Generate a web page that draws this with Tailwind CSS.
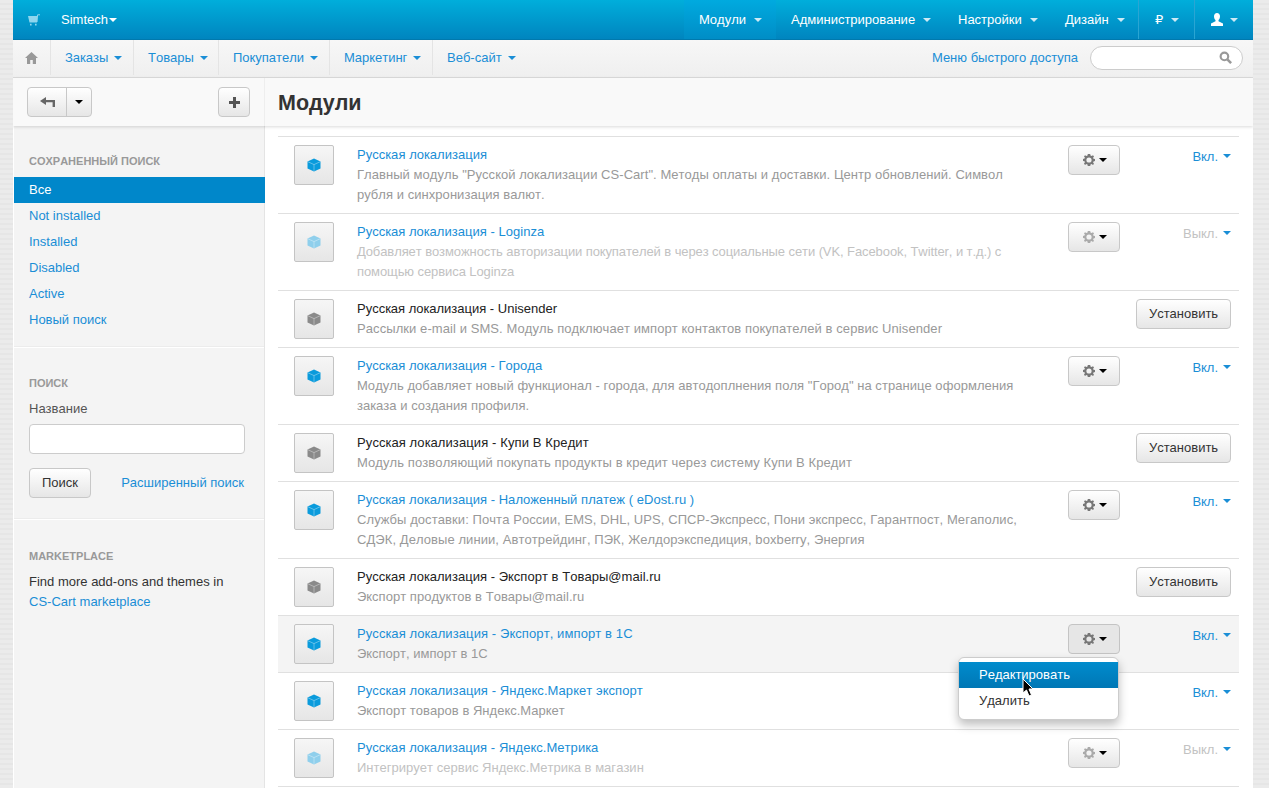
<!DOCTYPE html>
<html lang="ru">
<head>
    <meta charset="UTF-8">
    <title>Модули</title>
    <script src="https://cdn.jsdelivr.net/npm/@tailwindcss/browser@4"></script>
</head>
<body class="h-screen overflow-hidden bg-[#e8e8e8] bg-[repeating-linear-gradient(0deg,#ebebeb_0,#ebebeb_3px,#e6e6e6_3px,#e6e6e6_5px)] font-['Liberation_Sans',Arial,sans-serif] text-[13px] leading-5 text-[#333] [font-kerning:none]">
<div class="relative ml-[13px] w-[1240px] h-[788px] overflow-hidden bg-white">

    <!-- top bar -->
    <div class="flex h-10 items-stretch border-b border-[#0079ad] bg-gradient-to-b from-[#00aedb] to-[#0085bf] text-white">
        <div class="flex w-[27px] items-center justify-end">
            <svg class="h-3 w-3" viewBox="0 0 12 12"><path fill="#8ed6ee" d="M0 2h9.200L9 8.500H1.500zM2 9.800h1.600V11.500H2zM7 9.800h1.600V11.500H7z"/><path fill="none" stroke="#8ed6ee" d="M9 8 9.600 .8H12"/></svg>
        </div>
        <div class="ml-[21px] flex items-center">Simtech<span class="ml-px h-0 w-0 border-x-4 border-t-4 border-x-transparent border-t-white"></span></div>
        <div class="ml-auto flex items-stretch">
            <div class="flex w-[92px] items-center bg-gradient-to-b from-[#00aadf] to-[#008dc6] pl-[15px]">Модули<span class="ml-2 h-0 w-0 border-x-4 border-t-4 border-x-transparent border-t-[#cdeaf5]"></span></div>
            <div class="flex w-[167px] items-center pl-[15px]">Администрирование<span class="ml-2 h-0 w-0 border-x-4 border-t-4 border-x-transparent border-t-[#cdeaf5]"></span></div>
            <div class="flex w-[107px] items-center pl-[15px]">Настройки<span class="ml-2 h-0 w-0 border-x-4 border-t-4 border-x-transparent border-t-[#cdeaf5]"></span></div>
            <div class="flex w-[88px] items-center pl-[15px]">Дизайн<span class="ml-2 h-0 w-0 border-x-4 border-t-4 border-x-transparent border-t-[#cdeaf5]"></span></div>
            <div class="flex w-[56px] items-center border-l border-[#2aa5d3] pl-4 font-['DejaVu_Sans',sans-serif] text-[13px]">₽<span class="ml-2 h-0 w-0 border-x-4 border-t-4 border-x-transparent border-t-[#cdeaf5]"></span></div>
            <div class="flex w-[59px] items-center border-l border-[#2aa5d3] pl-4">
                <svg class="h-[13px] w-3" viewBox="0 0 12 13"><path fill="#fff" d="M6 0c1.800 0 3 1.300 3 3.200C9 5 8.200 6.500 7.500 7v1.200L12 10.500V13H0v-2.500l4.500-2.300V7C3.800 6.500 3 5 3 3.200 3 1.300 4.200 0 6 0z"/></svg>
                <span class="ml-[7px] h-0 w-0 border-x-4 border-t-4 border-x-transparent border-t-[#cdeaf5]"></span>
            </div>
        </div>
    </div>

    <!-- second nav -->
    <div class="flex h-[38px] items-stretch border-b border-[#dcdcdc] bg-gradient-to-b from-[#f7f7f7] to-[#efefef] pb-[2px] text-[#1a8ed6]">
        <div class="flex w-[38px] items-center justify-center border-r border-[#e4e4e4]">
            <svg class="h-3 w-[13px]" viewBox="0 0 13 12"><path fill="#999" d="M6.500 0 13 6h-2v6H7.800V8H5.200v4H2V6H0z"/></svg>
        </div>
        <div class="flex w-[83px] items-center border-r border-[#e4e4e4] pl-[14px]">Заказы<span class="ml-[6px] h-0 w-0 border-x-4 border-t-4 border-x-transparent border-t-[#1a8ed6]"></span></div>
        <div class="flex w-[85px] items-center border-r border-[#e4e4e4] pl-[14px]">Товары<span class="ml-[6px] h-0 w-0 border-x-4 border-t-4 border-x-transparent border-t-[#1a8ed6]"></span></div>
        <div class="flex w-[111px] items-center border-r border-[#e4e4e4] pl-[14px]">Покупатели<span class="ml-[6px] h-0 w-0 border-x-4 border-t-4 border-x-transparent border-t-[#1a8ed6]"></span></div>
        <div class="flex w-[103px] items-center border-r border-[#e4e4e4] pl-[14px]">Маркетинг<span class="ml-[6px] h-0 w-0 border-x-4 border-t-4 border-x-transparent border-t-[#1a8ed6]"></span></div>
        <div class="flex items-center pl-[14px]">Веб-сайт<span class="ml-[6px] h-0 w-0 border-x-4 border-t-4 border-x-transparent border-t-[#1a8ed6]"></span></div>
        <div class="ml-auto flex items-center pr-[10px]">
            <span>Меню быстрого доступа</span>
            <div class="ml-3 flex h-6 w-[153px] items-center justify-end rounded-xl border border-[#ccc] bg-white pr-[10px]">
                <svg class="h-[13px] w-[13px]" viewBox="0 0 12 12"><circle cx="5" cy="5" r="3.500" fill="none" stroke="#999" stroke-width="2"/><path stroke="#999" stroke-width="2.400" d="m7.700 7.700 3.500 3.500"/></svg>
            </div>
        </div>
    </div>

    <!-- toolbar -->
    <div class="relative z-10 flex h-[48px] bg-[#f9f9f9] shadow-[0_1px_3px_rgba(0,0,0,0.15)]">
        <div class="flex w-[252px] items-center justify-between border-r border-[#eeeeee] pl-[14px] pr-[14px]">
            <div class="flex h-[30px] w-[65px] rounded border border-[#c8c8c8] bg-gradient-to-b from-white to-[#e6e6e6]">
                <div class="flex w-[39px] items-center justify-center border-r border-[#c8c8c8]">
                    <svg class="h-[10px] w-[15px]" viewBox="0 0 15 10"><path fill="#666" d="M0 4 6 0v3h9v7h-2.400V5.300H6V8z"/></svg>
                </div>
                <div class="flex flex-1 items-center justify-center"><span class="h-0 w-0 border-x-4 border-t-4 border-x-transparent border-t-black"></span></div>
            </div>
            <div class="flex h-[30px] w-8 items-center justify-center rounded border border-[#c8c8c8] bg-gradient-to-b from-white to-[#e6e6e6]">
                <svg class="h-[11px] w-[11px]" viewBox="0 0 11 11"><path fill="#555" d="M4 0h3v4h4v3H7v4H4V7H0V4h4z"/></svg>
            </div>
        </div>
        <h1 class="ml-[13px] flex items-center pt-[2px] text-[21.5px] font-bold text-[#333]">Модули</h1>
    </div>

    <div class="flex">
        <!-- sidebar -->
        <aside class="h-[700px] w-[252px] shrink-0 border-r border-[#e4e4e4] border-l border-l-white bg-[#f4f4f4]">
            <div class="pt-[25px]">
                <h4 class="mb-[6px] pl-[15px] text-[11px] font-bold uppercase text-[#999]">Сохраненный поиск</h4>
                <div class="mr-[-1px] flex h-[26px] items-center bg-[#0087ca] pl-[15px] text-white">Все</div>
                <div class="flex h-[26px] items-center pl-[15px] text-[#1a8ed6]">Not installed</div>
                <div class="flex h-[26px] items-center pl-[15px] text-[#1a8ed6]">Installed</div>
                <div class="flex h-[26px] items-center pl-[15px] text-[#1a8ed6]">Disabled</div>
                <div class="flex h-[26px] items-center pl-[15px] text-[#1a8ed6]">Active</div>
                <div class="flex h-[26px] items-center pl-[15px] text-[#1a8ed6]">Новый поиск</div>
            </div>
            <div class="mt-[13px] border-t border-b border-t-[#ececec] border-b-white"></div>
            <div class="px-[15px] pt-[25px]">
                <h4 class="mb-[6px] text-[11px] font-bold uppercase text-[#999]">Поиск</h4>
                <div class="mb-[5px] text-[#555]">Название</div>
                <div class="h-[30px] w-[216px] rounded border border-[#ccc] bg-white"></div>
                <div class="mt-[14px] flex items-center justify-between pr-[5px]">
                    <div class="flex h-[30px] w-[62px] items-center justify-center rounded border border-[#c8c8c8] bg-gradient-to-b from-white to-[#e6e6e6]">Поиск</div>
                    <span class="text-[#1a8ed6]">Расширенный поиск</span>
                </div>
            </div>
            <div class="mt-[20px] border-t border-b border-t-[#ececec] border-b-white"></div>
            <div class="px-[15px] pt-[26px]">
                <h4 class="mb-[6px] text-[11px] font-bold uppercase text-[#999]">Marketplace</h4>
                <p>Find more add-ons and themes in<br><span class="text-[#1a8ed6]">CS-Cart marketplace</span></p>
            </div>
        </aside>

        <!-- addons list -->
        <main id="addons" class="ml-[13px] mt-[10px] w-[961px] border-t border-[#e0e0e0]"></main>
    </div>

    <!-- open dropdown -->
    <div class="absolute left-[945px] top-[657px] z-20 h-[63px] w-[161px] rounded-md border border-[#ccc] bg-white py-1 shadow-[0_5px_10px_rgba(0,0,0,0.25)]">
        <div class="flex h-[26px] items-center bg-gradient-to-b from-[#008ccd] to-[#0077b5] pl-5 text-white">Редактировать</div>
        <div class="flex h-[26px] items-center pl-5">Удалить</div>
    </div>
    <svg class="absolute left-[1009px] top-[678px] z-30 h-[19px] w-[13px]" viewBox="0 0 13 19"><path fill="#000" stroke="#fff" stroke-width="1" d="M1 1v14l3.500-3 2.500 6 2.500-1-2.500-6H11z"/></svg>
</div>

<script>
    const cube = (color) => `<svg class="h-[14px] w-[14px]" viewBox="0 0 14 14"><path fill="${color}" d="M7 .5l6.500 3v7L7 13.500.5 10.500v-7z"/><path fill="none" stroke="#fff" stroke-opacity=".45" stroke-width=".8" d="M1 3.800l6 2.800 6-2.800M7 6.600v6.600"/></svg>`;
    const gear = (color) => `<svg class="h-3 w-3" viewBox="0 0 12 12"><path fill="${color}" fill-rule="evenodd" d="M4.800 0h2.400l.3 1.600 1.100.5L10 1.200 11 2.500l-.9 1.300.4 1 1.500.3v2l-1.500.3-.4 1 .9 1.300-1 1.300-1.400-.9-1.100.5-.3 1.600H4.800l-.3-1.600-1.100-.5-1.400.9L1 9.500l.9-1.300-.4-1L0 6.900v-2l1.500-.3.4-1L1 2.500 2 1.200l1.400.9 1.100-.5zM6 3.400a2.500 2.500 0 1 0 0 5.200 2.500 2.500 0 0 0 0-5.200z"/></svg>`;

    // ts, tt: letter spacing of description and title, px
    const addons = [
        {state: 'on', ts: 0.05, tt: 0.05, title: 'Русская локализация', text: 'Главный модуль "Русской локализации CS-Cart". Методы оплаты и доставки. Центр обновлений. Символ<br>рубля и синхронизация валют.'},
        {state: 'off', ts: -0.09, tt: 0.03, title: 'Русская локализация - Loginza', text: 'Добавляет возможность авторизации покупателей в через социальные сети (VK, Facebook, Twitter, и т.д.) с<br>помощью сервиса Loginza'},
        {state: 'new', ts: 0.08, tt: 0, title: 'Русская локализация - Unisender', text: 'Рассылки e-mail и SMS. Модуль подключает импорт контактов покупателей в сервис Unisender'},
        {state: 'on', ts: 0.04, tt: 0.03, title: 'Русская локализация - Города', text: 'Модуль добавляет новый функционал - города, для автодоплнения поля "Город" на странице оформления<br>заказа и создания профиля.'},
        {state: 'new', ts: 0.1, tt: 0.11, title: 'Русская локализация - Купи В Кредит', text: 'Модуль позволяющий покупать продукты в кредит через систему Купи В Кредит'},
        {state: 'on', ts: 0.08, tt: 0.04, title: 'Русская локализация - Наложенный платеж ( eDost.ru )', text: 'Службы доставки: Почта России, EMS, DHL, UPS, СПСР-Экспресс, Пони экспресс, Гарантпост, Мегаполис,<br>СДЭК, Деловые линии, Автотрейдинг, ПЭК, Желдорэкспедиция, boxberry, Энергия'},
        {state: 'new', ts: 0.03, tt: 0.04, title: 'Русская локализация - Экспорт в Товары@mail.ru', text: 'Экспорт продуктов в Товары@mail.ru'},
        {state: 'on', ts: 0, tt: 0.1, hover: true, title: 'Русская локализация - Экспорт, импорт в 1С', text: 'Экспорт, импорт в 1С'},
        {state: 'on', ts: 0.03, tt: 0.09, noGear: true, title: 'Русская локализация - Яндекс.Маркет экспорт', text: 'Экспорт товаров в Яндекс.Маркет'},
        {state: 'off', ts: 0.02, tt: 0.05, title: 'Русская локализация - Яндекс.Метрика', text: 'Интегрирует сервис Яндекс.Метрика в магазин'},
    ];

    document.getElementById('addons').innerHTML = addons.map((a) => {
        const cubeColor = a.state === 'on' ? '#0a9bdc' : a.state === 'off' ? '#8fcfec' : '#8a8a8a';
        const titleColor = a.state === 'new' ? 'text-[#222]' : 'text-[#1a8ed6]';
        const textColor = a.state === 'off' ? 'text-[#c2c2c2]' : 'text-[#999]';
        const gearBtn = a.hover
            ? `<div class="flex h-[30px] w-[52px] items-center justify-center gap-[4px] rounded border border-[#c4c4c4] bg-[#e6e6e6] pl-[2px]">${gear('#777')}<span class="h-0 w-0 border-x-4 border-t-4 border-x-transparent border-t-black"></span></div>`
            : `<div class="flex h-[30px] w-[52px] items-center justify-center gap-[4px] rounded border border-[#c8c8c8] bg-gradient-to-b from-white to-[#e6e6e6] pl-[2px]">${gear(a.state === 'off' ? '#aaa' : '#777')}<span class="h-0 w-0 border-x-4 border-t-4 border-x-transparent border-t-black"></span></div>`;
        const status = a.state === 'on'
            ? `<span class="text-[#1a8ed6]">Вкл.</span>`
            : `<span class="text-[#c2c2c2]">Выкл.</span>`;
        const actions = a.state === 'new'
            ? `<div class="flex h-[30px] w-[95px] items-center justify-center rounded border border-[#c8c8c8] bg-gradient-to-b from-white to-[#e6e6e6]">Установить</div>`
            : `<div class="w-[52px]">${a.noGear ? '' : gearBtn}</div>
               <div class="flex w-[111px] items-center justify-end pt-[3px] leading-[18px]">${status}<span class="ml-[5px] mb-[3px] h-0 w-0 border-x-4 border-t-4 border-x-transparent border-t-[#1a8ed6]"></span></div>`;
        return `<div class="flex items-start border-b border-[#e0e0e0] pb-2 pl-4 pr-2 pt-2 ${a.hover ? 'bg-[#f4f4f4]' : ''}">
            <div class="flex h-10 w-10 shrink-0 items-center justify-center rounded-[2px] border border-[#c4c4c4] bg-gradient-to-b from-[#f6f6f6] to-[#e6e6e6]">${cube(cubeColor)}</div>
            <div class="ml-[23px] w-[690px]">
                <div class="${titleColor}" style="letter-spacing:${a.tt}px">${a.title}</div>
                <div class="${textColor}" style="letter-spacing:${a.ts}px">${a.text}</div>
            </div>
            <div class="ml-auto flex items-start">${actions}</div>
        </div>`;
    }).join('');
</script>
</body>
</html>
